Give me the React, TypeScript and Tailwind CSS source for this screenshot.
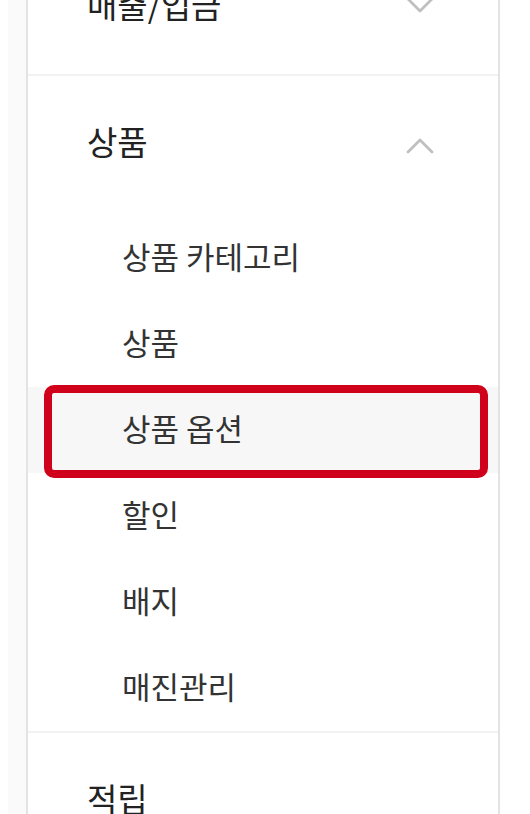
import { ChevronDown, ChevronUp } from "lucide-react";

const FONT = { fontFamily: '"Noto Sans CJK KR", "Noto Sans", sans-serif' };

const subItems = ["상품 카테고리", "상품", "상품 옵션", "할인", "배지", "매진관리"];
const ACTIVE = "상품 옵션";

function Header({
  label,
  open,
  chevron = true,
  clipped,
}: {
  label: string;
  open?: boolean;
  chevron?: boolean;
  clipped?: boolean;
}) {
  return (
    <div className="h-[139px] flex items-center justify-between pl-[59px] pr-[54px]">
      <span className={`relative text-[33px] leading-none text-[#222222] ${clipped ? "top-0" : "-top-[4px]"}`}>
        {label}
      </span>
      {chevron &&
        (open ? (
          <ChevronUp className="w-[48px] h-[48px] text-[#bfbfbf]" strokeWidth={1.4} />
        ) : (
          <ChevronDown className="w-[48px] h-[48px] text-[#bfbfbf]" strokeWidth={1.4} />
        ))}
    </div>
  );
}

export default function App() {
  return (
    <div className="w-[530px] h-[814px] overflow-hidden bg-white flex" style={FONT}>
      <div className="w-2 shrink-0 bg-white" />
      <div className="w-[18px] shrink-0 bg-[#fafafa]" />
      <div className="w-[474px] shrink-0 border-x-2 border-[#e3e3e3] bg-white">
        <div className="-mt-[65px]">
          <div className="border-b-2 border-[#f2f2f2]">
            <Header label="매출/입금" clipped />
          </div>
          <div className="border-b-2 border-[#f2f2f2]">
            <Header label="상품" open />
            <ul>
              {subItems.map((item) => {
                const active = item === ACTIVE;
                return (
                  <li
                    key={item}
                    className={`relative h-[86px] flex items-center pl-[94px] ${active ? "bg-[#f7f7f7]" : ""}`}
                  >
                    <span className="relative -top-[3px] text-[31px] leading-none text-[#333333]">{item}</span>
                    {active && (
                      <div className="absolute left-[16px] right-[10px] -top-[2px] -bottom-[5px] border-[8px] border-[#d0021b] rounded-[10px]" />
                    )}
                  </li>
                );
              })}
            </ul>
          </div>
          <Header label="적립" chevron={false} />
        </div>
      </div>
      <div className="flex-1 bg-white" />
    </div>
  );
}
